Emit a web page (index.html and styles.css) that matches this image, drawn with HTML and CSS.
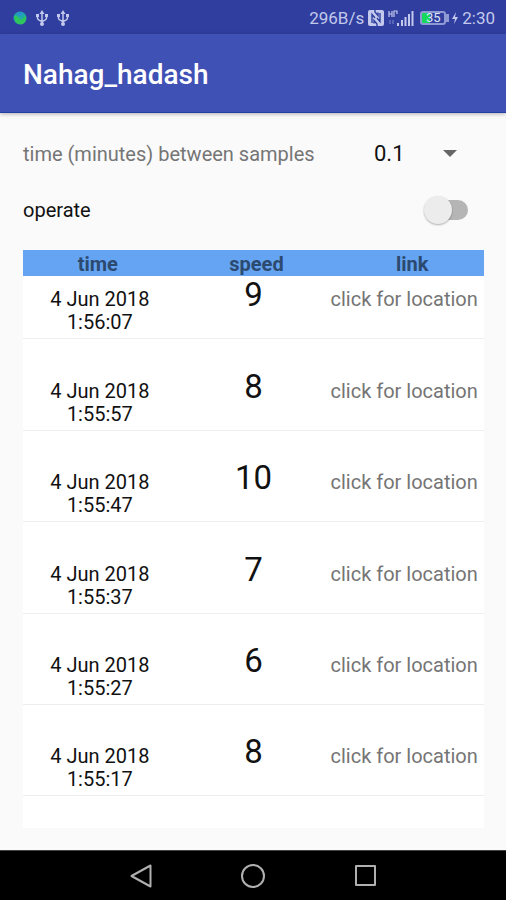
FILE: index.html
```html
<!DOCTYPE html>
<html lang="en">
<head>
<meta charset="utf-8">
<meta name="viewport" content="width=device-width, initial-scale=1">
<title>Nahag_hadash</title>
<link rel="stylesheet" href="styles.css">
</head>
<body>
<div class="status">
  <div class="status-left">
    <svg width="14" height="14" viewBox="0 0 14 14" aria-hidden="true"><circle cx="7" cy="7" r="6.500" fill="#1fa9a8"/><path d="M1 5Q3 4 5 6T8 9Q11 6 13 5Q14 10 10 13Q4 14 2 10Z" fill="#2fc45c"/><path d="M3 3Q7 0 10 2L7 5Z" fill="#2b8fd6"/></svg>
    <svg class="usb" width="12" height="16" viewBox="0 0 12 16" aria-hidden="true"><path d="M6 3V14M1.500 6V8Q1.500 10 6 11.500Q10.500 10 10.500 8V6"/><path class="fill" d="M6 0L8.500 4H3.500ZM0 4H3V7H0ZM9 4H12V7H9Z"/><circle class="fill" cx="6" cy="14" r="2"/></svg>
    <svg class="usb" width="12" height="16" viewBox="0 0 12 16" aria-hidden="true"><path d="M6 3V14M1.500 6V8Q1.500 10 6 11.500Q10.500 10 10.500 8V6"/><path class="fill" d="M6 0L8.500 4H3.500ZM0 4H3V7H0ZM9 4H12V7H9Z"/><circle class="fill" cx="6" cy="14" r="2"/></svg>
  </div>
  <div class="status-right">
    <span>296B/s</span>
    <svg width="16" height="16" viewBox="0 0 16 16" aria-hidden="true"><rect width="16" height="16" rx="2" fill="#c3c9ec"/><path d="M4 13V4.500L7 8M12 3V11.500L9 8M7 0V2L10 5.500V2.500M9 16V14L6 10.500V13.500" fill="none" stroke="#303f9f" stroke-width="1.400"/></svg>
    <svg class="signal" width="26" height="17" viewBox="0 0 26 17" aria-hidden="true"><path d="M1 1V7M1 4H4M4 1V7M6 7V1H9V4" fill="none" stroke="#c3c9ec" stroke-width="1.200"/><path d="M2 10V14M5 10V14" stroke="#6572bd" stroke-width="1.500"/><path d="M9 13H11V16H9ZM13 10H15V16H13ZM16.500 7H18.500V16H16.500ZM20 4H22V16H20ZM23.500 1H25.500V16H23.500Z" fill="#c3c9ec"/></svg>
    <div class="battery"><span>35</span></div>
    <svg class="bolt" width="6" height="12" viewBox="0 0 6 12" aria-hidden="true"><path d="M4 0L0 7H3L2 12L6 5H3Z" fill="#c3c9ec"/></svg>
    <span>2:30</span>
  </div>
</div>
<header class="appbar"><h1>Nahag_hadash</h1></header>
<main class="content">
  <div class="setting">
    <label class="muted" for="interval">time (minutes) between samples</label>
    <div class="spinner">
      <select id="interval"><option>0.1</option><option>0.5</option><option>1</option></select>
    </div>
  </div>
  <label class="setting operate">operate
    <input class="switch" type="checkbox" role="switch">
  </label>
  <div class="list">
    <table>
      <thead><tr><th>time</th><th>speed</th><th>link</th></tr></thead>
      <tbody>
        <tr><td>4 Jun 2018<br>1:56:07</td><td>9</td><td><a href="#">click for location</a></td></tr>
        <tr><td>4 Jun 2018<br>1:55:57</td><td>8</td><td><a href="#">click for location</a></td></tr>
        <tr><td>4 Jun 2018<br>1:55:47</td><td>10</td><td><a href="#">click for location</a></td></tr>
        <tr><td>4 Jun 2018<br>1:55:37</td><td>7</td><td><a href="#">click for location</a></td></tr>
        <tr><td>4 Jun 2018<br>1:55:27</td><td>6</td><td><a href="#">click for location</a></td></tr>
        <tr><td>4 Jun 2018<br>1:55:17</td><td>8</td><td><a href="#">click for location</a></td></tr>
      </tbody>
    </table>
  </div>
</main>
<nav class="navbar">
  <button aria-label="Back"><svg width="24" height="26" viewBox="0 0 24 26"><path d="M21.500 2.500V23.500L2.500 13Z"/></svg></button>
  <button aria-label="Home"><svg width="26" height="26" viewBox="0 0 26 26"><circle cx="13" cy="13" r="11"/></svg></button>
  <button aria-label="Recent apps"><svg width="24" height="26" viewBox="0 0 24 26"><rect x="3" y="3" width="19" height="19"/></svg></button>
</nav>
</body>
</html>
```

FILE: styles.css
```css
* { box-sizing: border-box; }

body {
  margin: 0;
  min-height: 100vh;
  display: flex;
  flex-direction: column;
  background: #fafafa;
  color: #111;
  font-family: Roboto, "Liberation Sans", sans-serif;
  font-size: 20px;
  line-height: 23px;
}

.status {
  display: flex;
  justify-content: space-between;
  align-items: center;
  height: 34px;
  padding: 2px 11px 0 13px;
  background: #303f9f;
  color: #c3c9ec;
  font-size: 17px;
}
.status-left { display: flex; align-items: center; gap: 9px; }
.status-right { display: flex; align-items: center; gap: 4px; }
.usb { fill: none; stroke: #c3c9ec; stroke-width: 1.5; }
.usb .fill { fill: #c3c9ec; stroke: none; }
.signal { margin-right: 2px; }

.battery {
  position: relative;
  width: 26px;
  height: 14px;
  margin-right: 2px;
  border: 2px solid #8f99d4;
  border-radius: 3px;
  background: linear-gradient(to right, #16d95b 38%, #303f9f 38%);
  color: #dfe3f7;
  font-size: 13px;
  line-height: 10px;
  text-align: center;
}
.battery::after {
  content: "";
  position: absolute;
  top: 1px;
  right: -5px;
  width: 3px;
  height: 8px;
  background: #8f99d4;
}

.appbar {
  display: flex;
  align-items: center;
  height: 79px;
  padding: 4px 23px 0;
  background: #3f51b5;
  border-bottom: 1px solid #2440a8;
  box-shadow: 0 1px 4px rgba(0, 0, 0, 0.3);
  color: #fff;
}
h1 { margin: 0; font-size: 28px; line-height: 36px; font-weight: 500; }

.content {
  flex: 1;
  display: flex;
  flex-direction: column;
  padding: 13px 22px 22px 23px;
}
.setting { display: flex; align-items: center; justify-content: space-between; height: 56px; }
.muted { color: #757575; }
.spinner { position: relative; width: 110px; }
.spinner::after {
  content: "";
  position: absolute;
  top: 10px;
  right: 27px;
  border: 7px solid transparent;
  border-top-color: #666;
  border-bottom: 0;
  pointer-events: none;
}
select {
  width: 100%;
  padding: 0;
  border: 0;
  appearance: none;
  background: transparent;
  color: #111;
  font: inherit;
  font-size: 22px;
  line-height: 28px;
}

.switch {
  appearance: none;
  position: relative;
  width: 40px;
  height: 20px;
  margin: 0 16px 0 0;
  border-radius: 10px;
  background: #b5b5b5;
}
.switch::before {
  content: "";
  position: absolute;
  top: -4px;
  left: -4px;
  width: 28px;
  height: 28px;
  border-radius: 50%;
  background: #ececec;
  box-shadow: 0 1px 2px rgba(0, 0, 0, 0.3);
}

.list { flex: 1; margin-top: 12px; background: #fff; }
table { width: 100%; table-layout: fixed; border-collapse: separate; border-spacing: 0; }
th {
  height: 26px;
  padding: 2px 0 0;
  background: #64a4f2;
  color: #2c4a70;
  font-weight: 700;
  line-height: 24px;
}
th:nth-child(1) { padding-right: 4px; }
th:nth-child(2) { padding-left: 6px; }
th:nth-child(3) { padding-left: 10px; }

td {
  height: 91px;
  padding: 0 0 4px;
  border-bottom: 1px solid #eee;
  vertical-align: bottom;
  text-align: center;
}
tr:nth-child(even) td { height: 92px; }
tr:last-child td { height: 91px; }
tbody tr:first-child td { height: 63px; }
td:nth-child(2) { padding-bottom: 24px; font-size: 33px; line-height: 38px; }
td:nth-child(3) { padding: 0 6px 27px 0; white-space: nowrap; }
td a { color: #757575; text-decoration: none; }

.navbar {
  display: flex;
  align-items: center;
  justify-content: center;
  gap: 64px;
  height: 50px;
  background: #000;
  border-top: 1px solid #444;
}
.navbar button {
  display: flex;
  align-items: center;
  justify-content: center;
  width: 48px;
  height: 48px;
  padding: 0;
  border: 0;
  background: none;
}
.navbar svg { fill: none; stroke: #b0b0b0; stroke-width: 2; stroke-linejoin: round; }
```
